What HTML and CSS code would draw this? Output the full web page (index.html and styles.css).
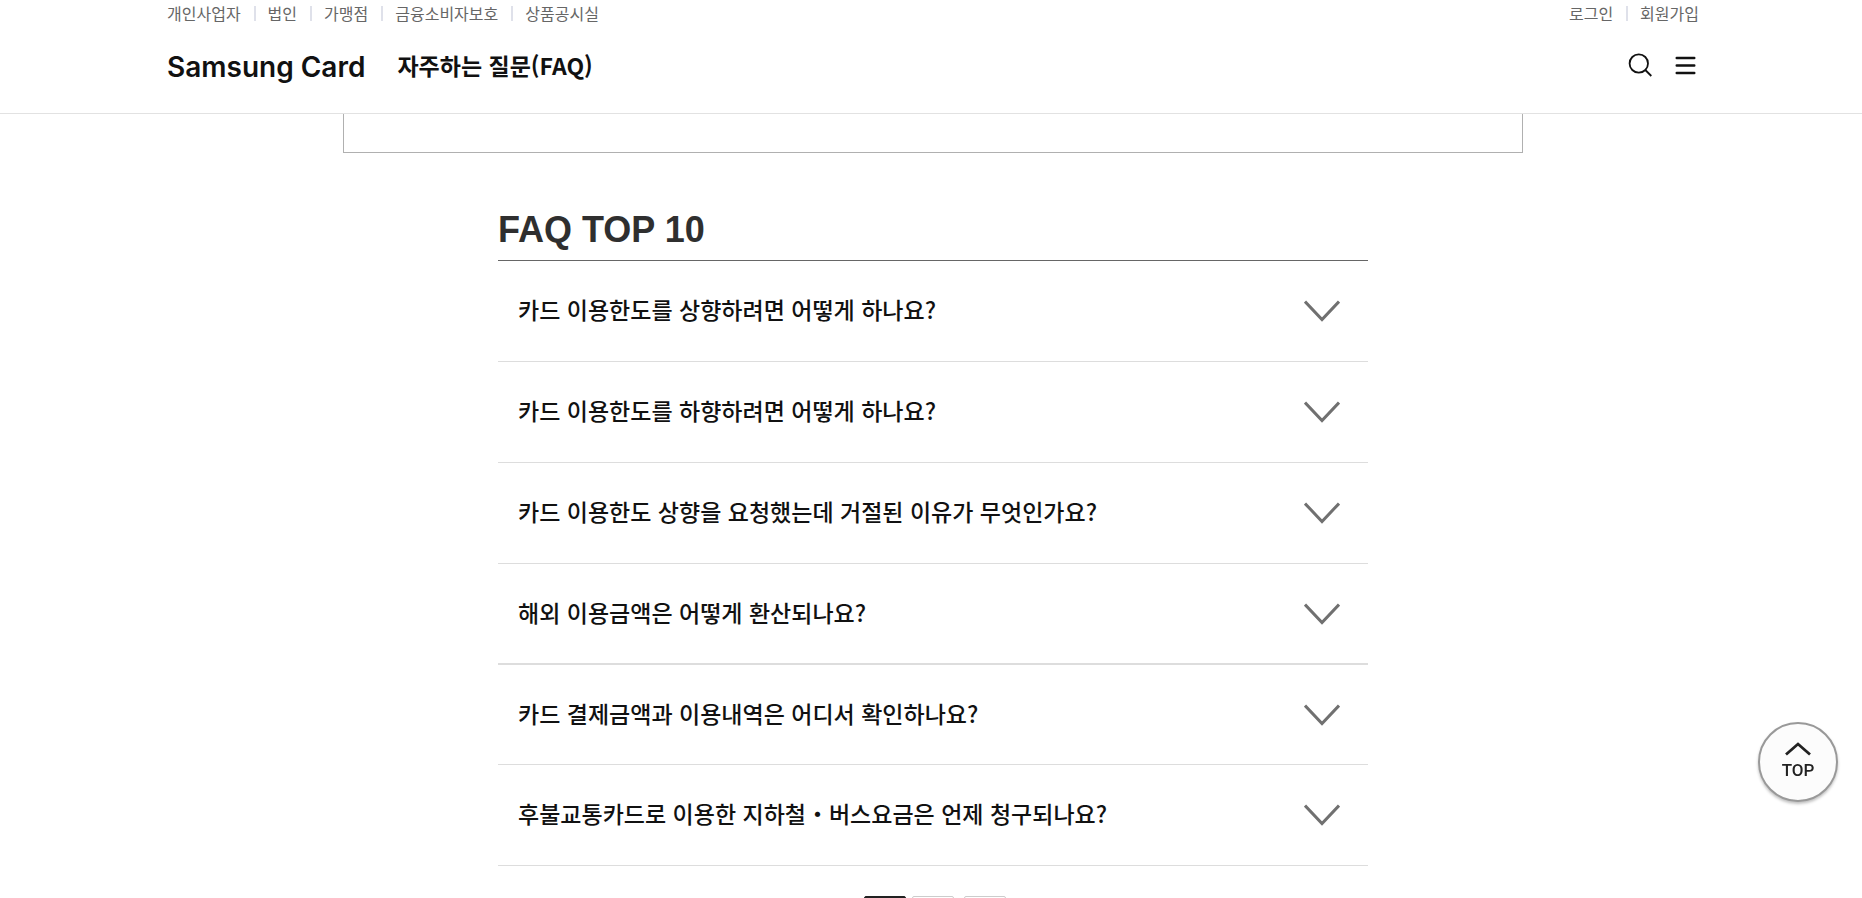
FILE: index.html
```
<!DOCTYPE html>
<html lang="ko">
<head>
  <meta charset="UTF-8">
  <meta name="viewport" content="width=device-width, initial-scale=1.0">
  <title>자주하는 질문(FAQ)</title>
  <link rel="stylesheet" href="styles.css">
</head>
<body>

  <header class="header">
    <div class="header-inner">
      <!-- 상단 메뉴 -->
      <div class="util">
        <ul class="util-list">
          <li><a href="#">개인사업자</a></li>
          <li><a href="#">법인</a></li>
          <li><a href="#">가맹점</a></li>
          <li><a href="#">금융소비자보호</a></li>
          <li><a href="#">상품공시실</a></li>
        </ul>
        <ul class="util-list">
          <li><a href="#">로그인</a></li>
          <li><a href="#">회원가입</a></li>
        </ul>
      </div>

      <div class="title-bar">
        <a href="#" class="logo">Samsung Card</a>
        <h1>자주하는 질문(FAQ)</h1>
        <button type="button" class="icon-btn" aria-label="검색">
          <svg width="26" height="26" viewBox="0 0 26 26" fill="none" stroke="#111" stroke-width="1.8">
            <circle cx="11.8" cy="11.5" r="9.2"/>
            <path d="M18.3 18l6 6"/>
          </svg>
        </button>
        <button type="button" class="icon-btn" aria-label="전체메뉴">
          <svg width="26" height="26" viewBox="0 0 26 26" fill="none" stroke="#111" stroke-width="2.4" stroke-linecap="round">
            <path d="M3.7 6h17.6M3.7 13.5h17.6M3.7 21h17.6"/>
          </svg>
        </button>
      </div>
    </div>
  </header>

  <main class="content">
    <div class="search-box"></div>

    <section class="faq">
      <h2>FAQ TOP 10</h2>
      <ul class="faq-list">
        <li><button type="button"><span>카드 이용한도를 상향하려면 어떻게 하나요?</span><svg class="arrow" viewBox="0 0 36 22"><path d="M1 1.5l17 18 17-18"/></svg></button></li>
        <li><button type="button"><span>카드 이용한도를 하향하려면 어떻게 하나요?</span><svg class="arrow" viewBox="0 0 36 22"><path d="M1 1.5l17 18 17-18"/></svg></button></li>
        <li><button type="button"><span>카드 이용한도 상향을 요청했는데 거절된 이유가 무엇인가요?</span><svg class="arrow" viewBox="0 0 36 22"><path d="M1 1.5l17 18 17-18"/></svg></button></li>
        <li class="group-end"><button type="button"><span>해외 이용금액은 어떻게 환산되나요?</span><svg class="arrow" viewBox="0 0 36 22"><path d="M1 1.5l17 18 17-18"/></svg></button></li>
        <li><button type="button"><span>카드 결제금액과 이용내역은 어디서 확인하나요?</span><svg class="arrow" viewBox="0 0 36 22"><path d="M1 1.5l17 18 17-18"/></svg></button></li>
        <li><button type="button"><span>후불교통카드로 이용한 지하철・버스요금은 언제 청구되나요?</span><svg class="arrow" viewBox="0 0 36 22"><path d="M1 1.5l17 18 17-18"/></svg></button></li>
      </ul>

      <div class="slide-nav">
        <button type="button" class="on" aria-label="첫번째"></button>
        <button type="button" aria-label="두번째"></button>
        <button type="button" class="next" aria-label="다음"></button>
      </div>
    </section>
  </main>

  <a href="#" class="btn-top">
    <svg width="26" height="14" viewBox="0 0 26 14" fill="none" stroke="#222" stroke-width="2.8">
      <path d="M1 12.5L13 2l12 10.5"/>
    </svg>
    TOP
  </a>

</body>
</html>
```

FILE: styles.css
```
* {
  box-sizing: border-box;
}

body {
  margin: 0;
  height: 100vh;
  overflow: hidden;
  font-family: "Noto Sans CJK KR", sans-serif;
  color: #111;
  background-color: #fff;
}

ul {
  margin: 0;
  padding: 0;
  list-style: none;
}

a {
  color: inherit;
  text-decoration: none;
}

button {
  margin: 0;
  padding: 0;
  border: 0;
  background: none;
  font-family: inherit;
  color: inherit;
  cursor: pointer;
}

/* header */
.header {
  height: 114px;
  padding-left: 4px;
  border-bottom: 1px solid #e2e2e2;
}

.header-inner {
  max-width: 1532px;
  margin: 0 auto;
}

.util {
  display: flex;
  justify-content: space-between;
  height: 26px;
}

.util-list {
  display: flex;
  align-items: center;
  font-size: 16px;
  line-height: 26px;
  color: #666;
}

.util-list li {
  display: flex;
  align-items: center;
}

.util-list li + li::before {
  content: "";
  width: 2px;
  height: 15px;
  margin: 0 12px 0 13px;
  background-color: #dfe1ea;
}

.title-bar {
  display: flex;
  align-items: center;
  height: 78px;
}

.logo {
  margin-right: 32px;
  padding-top: 3px;
  font-family: Inter, sans-serif;
  font-size: 28px;
  font-weight: 600;
}

.title-bar h1 {
  margin: 0 auto 0 0;
  font-size: 23px;
  font-weight: 700;
}

.icon-btn {
  height: 26px;
  margin-left: 20px;
}

.icon-btn svg {
  display: block;
}

/* faq */
.content {
  padding-left: 4px;
}

.search-box {
  max-width: 1180px;
  height: 39px;
  margin: 0 auto;
  border: 1px solid #b0b0b0;
  border-top: 0;
}

.faq {
  max-width: 870px;
  margin: 0 auto;
}

.faq h2 {
  margin: 0;
  padding: 53px 0 6px;
  border-bottom: 1px solid #666;
  font-family: "Liberation Sans", sans-serif;
  font-size: 36px;
  line-height: 48px;
  color: #2f2f2f;
}

.faq-list li {
  height: 101px;
  border-bottom: 1px solid #ddd;
}

.faq-list .group-end {
  border-bottom-width: 2px;
}

.faq-list .group-end + li {
  height: 100px;
}

.faq-list button {
  display: flex;
  align-items: center;
  justify-content: space-between;
  width: 100%;
  height: 100%;
  padding: 0 28px 0 20px;
  font-size: 23px;
  font-weight: 500;
  text-align: left;
}

.faq-list span {
  padding-bottom: 4px;
}

.arrow {
  width: 36px;
  height: 22px;
  fill: none;
  stroke: #707070;
  stroke-width: 3;
}

.slide-nav {
  display: flex;
  justify-content: center;
  gap: 6px;
  padding: 30px 0 0 4px;
}

.slide-nav button {
  width: 42px;
  height: 42px;
  border: 1px solid #ccc;
  border-radius: 2px;
}

.slide-nav .on {
  border-color: #222;
  background-color: #222;
}

.slide-nav .next {
  margin-left: 4px;
}

/* top button */
.btn-top {
  position: fixed;
  right: 24px;
  bottom: 96px;
  display: flex;
  flex-direction: column;
  align-items: center;
  width: 80px;
  height: 80px;
  padding-top: 18px;
  border: 2px solid #999;
  border-radius: 50%;
  background-color: #fcfcfc;
  box-shadow: 0 2px 3px rgba(0, 0, 0, 0.25);
  font-family: Roboto, sans-serif;
  font-size: 17px;
  font-weight: 500;
  line-height: 28px;
  color: #222;
}
```
